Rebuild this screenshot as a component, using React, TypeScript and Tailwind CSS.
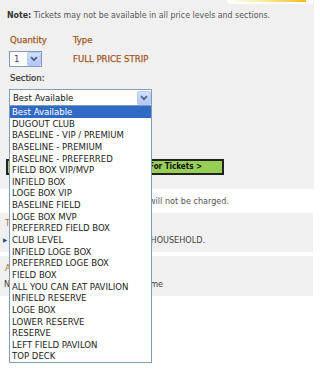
import React from "react";

const sections = [
  "Best Available",
  "DUGOUT CLUB",
  "BASELINE - VIP / PREMIUM",
  "BASELINE - PREMIUM",
  "BASELINE - PREFERRED",
  "FIELD BOX VIP/MVP",
  "INFIELD BOX",
  "LOGE BOX VIP",
  "BASELINE FIELD",
  "LOGE BOX MVP",
  "PREFERRED FIELD BOX",
  "CLUB LEVEL",
  "INFIELD LOGE BOX",
  "PREFERRED LOGE BOX",
  "FIELD BOX",
  "ALL YOU CAN EAT PAVILION",
  "INFIELD RESERVE",
  "LOGE BOX",
  "LOWER RESERVE",
  "RESERVE",
  "LEFT FIELD PAVILON",
  "TOP DECK",
];

function ArrowBtn() {
  return (
    <div className="w-[14px] h-[14px] rounded-[2px] border border-[#b6c9f3] bg-gradient-to-b from-[#d3e0fd] to-[#b2c6f4] flex items-center justify-center">
      <svg width="8" height="6" viewBox="0 0 8 6">
        <polyline points="1,1.2 4,4.2 7,1.2" fill="none" stroke="#4d6185" strokeWidth="1.8" />
      </svg>
    </div>
  );
}

export default function App() {
  return (
    <div className="w-[320px] h-[378px] bg-white overflow-hidden font-['DejaVu_Sans_Condensed','DejaVu_Sans',sans-serif] text-[9px] text-[#333]">
      {/* Panel 1 */}
      <div className="relative w-[314px] h-[189px] bg-[#f0f0f0]">
        <div className="absolute top-0 right-[1px] w-[86px] h-[4px] bg-white rounded-bl-[4px] flex justify-center">
          <div className="w-[72px] h-[2px] bg-gradient-to-r from-[#fffbe6] via-[#fde58a] to-[#f6b400]" />
        </div>
        <div className="pt-[9px] pl-[7px] leading-[12px] text-[8.75px] text-[#555] whitespace-nowrap">
          <span className="font-bold text-[#333]">Note:</span> Tickets may not be available in all price levels and sections.
        </div>
        <div className="flex pl-[10px] mt-[13px] leading-[12px] text-[#a4561f] text-[9.5px] [-webkit-text-stroke:0.25px_#a4561f]">
          <div className="w-[63px]">Quantity</div>
          <div>Type</div>
        </div>
        <div className="flex items-center pl-[9px] mt-[5px]">
          <div className="w-[33px] h-[16px] bg-white border border-[#7f9db9] flex items-center justify-between pl-[4px]">
            <span className="text-[#5b2d86] text-[9.5px] leading-[12px]">1</span>
            <ArrowBtn />
          </div>
          <div className="ml-[31px] text-[#a4561f] text-[9.5px] leading-[12px] [-webkit-text-stroke:0.25px_#a4561f]">FULL PRICE STRIP</div>
        </div>
        <div className="pl-[10px] mt-[5px] leading-[12px] text-[#333] text-[9.5px] [-webkit-text-stroke:0.2px_#333]">Section:</div>
        <div className="relative ml-[9px] mt-[5px] w-[143px]">
          <div className="h-[17px] bg-white border border-[#7f9db9] flex items-center justify-between pl-[3px]">
            <span className="text-[9.5px] leading-[12px] text-[#111]">Best Available</span>
            <ArrowBtn />
          </div>
          <div className="absolute z-10 left-0 top-[16px] w-[143px] bg-white border border-[#7f9db9]">
            {sections.map((s, i) => (
              <div
                key={s}
                className={
                  i === 0
                    ? "h-[11.65px] leading-[11.65px] pl-[2px] bg-[#316ac5] text-white text-[9.5px] whitespace-nowrap"
                    : "h-[11.65px] leading-[11.65px] pl-[2px] text-[#222] text-[9.5px] whitespace-nowrap"
                }
              >
                {s}
              </div>
            ))}
          </div>
        </div>
        <div className="ml-[6px] mt-[53px] w-[218px] h-[16px] border-2 border-[#222] bg-[#97ce55] flex items-center justify-end pr-[20px]">
          <span className="font-bold text-[8px] text-[#111] leading-[12px]">Look For Tickets &gt;</span>
        </div>
      </div>
      {/* white strip */}
      <div className="h-[24px] flex items-center">
        <div className="w-[229px] text-right whitespace-nowrap text-[#555] leading-[12px]">Your credit card will not be charged.</div>
      </div>
      {/* Panel 2 */}
      <div className="w-[313px] h-[39px] bg-[#f0f0f0] pl-[5px] pt-[4px]">
        <div className="text-[#c8741e] text-[9.5px] leading-[12px]">Ticket Limit</div>
        <div className="flex items-center mt-[5px] text-[#444] leading-[12px]">
          <span className="text-[#2a4a7a] text-[6px] -ml-[2px] mr-[3px] w-[5px]">▶</span>
          <div className="w-[194px] whitespace-nowrap text-justify [text-align-last:justify]">LIMIT OF 10 TICKETS PER HOUSEHOLD.</div>
        </div>
      </div>
      <div className="h-[4px]" />
      {/* Panel 3 */}
      <div className="w-[313px] h-[40px] bg-[#f0f0f0] pl-[4px] pt-[6px]">
        <div className="pl-[1px] text-[#c8741e] text-[9.5px] leading-[12px]">Additional Information</div>
        <div className="mt-[4px] w-[159px] whitespace-nowrap text-[#444] leading-[12px] text-justify [text-align-last:justify]">No refunds or exchanges for this game</div>
      </div>
    </div>
  );
}
